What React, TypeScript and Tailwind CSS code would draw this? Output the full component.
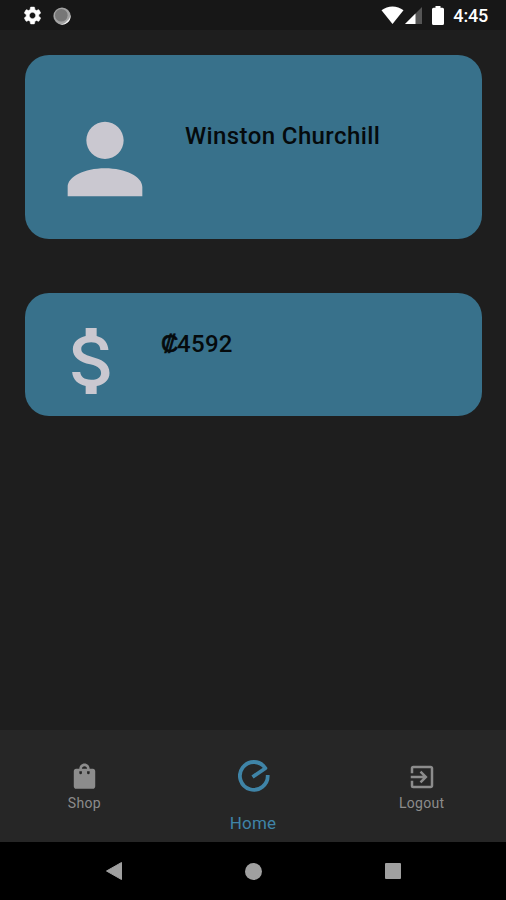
import type { ReactNode } from "react";

type TabItemProps = {
  children: ReactNode;
  label: string;
};

function StatusBar() {
  return (
    <header className="flex h-[30px] items-center bg-[#171717] pt-px pr-[18px] pl-[22px]">
      <svg className="size-[21px]" viewBox="0 0 24 24" fill="#fff">
        <path
          d="M19.14 12.94c.04-.3.06-.61.06-.94 0-.32-.02-.64-.07-.94l2.03-1.58a.49.49 0 0 0 .12-.61l-1.92-3.32a.488.488 0 0 0-.59-.22l-2.39.96c-.5-.38-1.03-.7-1.62-.94l-.36-2.54a.484.484 0 0 0-.48-.41h-3.84c-.24 0-.43.17-.47.41l-.36 2.54c-.59.24-1.13.57-1.62.94l-2.39-.96c-.22-.08-.47 0-.59.22L2.74 8.87c-.12.21-.08.47.12.61l2.03 1.58c-.05.3-.09.63-.09.94s.02.64.07.94l-2.03 1.58a.49.49 0 0 0-.12.61l1.92 3.32c.12.22.37.29.59.22l2.39-.96c.5.38 1.03.7 1.62.94l.36 2.54c.05.24.24.41.48.41h3.84c.24 0 .44-.17.47-.41l.36-2.54c.59-.24 1.13-.56 1.62-.94l2.39.96c.22.08.47 0 .59-.22l1.92-3.32c.12-.22.07-.47-.12-.61l-2.01-1.58zM12 15.6c-1.98 0-3.6-1.62-3.6-3.6s1.62-3.6 3.6-3.6 3.6 1.62 3.6 3.6-1.62 3.6-3.6 3.6z"
          stroke="#fff"
          strokeWidth=".6"
        />
      </svg>
      <svg className="ml-[10px] size-[18px]" viewBox="0 0 18 18">
        <circle cx="9" cy="9" r="8.6" fill="#a3a3a3" />
        <path d="M17.4 7.5A8.6 8.6 0 0 1 5.5 17 8.6 8.6 0 0 0 14 14a8.6 8.6 0 0 0 3.4-6.5z" fill="#f2f2f2" />
        <circle cx="8.3" cy="8.3" r="6.3" fill="#777" />
      </svg>
      <div className="ml-auto flex items-center">
        <svg className="mb-0.5 h-[18px] w-[23px]" viewBox="0 0 23 18" fill="#fff">
          <path d="M.5 4.3C6.8-.8 16.2-.8 22.5 4.3L11.5 18z" />
        </svg>
        <svg className="ml-px h-[17px] w-[17px]" viewBox="0 0 17 17">
          <path d="M0 17 17 0v17z" fill="#555" />
          <path d="M0 17 10.5 6.5V17z" fill="#fff" />
        </svg>
        <svg className="ml-[10px] h-[19px] w-[12px]" viewBox="0 0 12 19" fill="#fff">
          <path d="M3.5 0h5v1.7h2A1.5 1.5 0 0 1 12 3.2v14.3a1.5 1.5 0 0 1-1.5 1.5h-9A1.5 1.5 0 0 1 0 17.5V3.2a1.5 1.5 0 0 1 1.5-1.5h2z" />
        </svg>
        <span className="ml-[9px] text-[18px] leading-[28px] font-medium tracking-[-0.2px] text-white">
          4:45
        </span>
      </div>
    </header>
  );
}

function TabItem({ children, label }: TabItemProps) {
  return (
    <button className="flex flex-1 flex-col items-center pt-[31px] text-[#8c8c8c]" type="button">
      <span className="flex h-[31px] items-center">{children}</span>
      <span className="mt-px text-[14px] leading-[20px] tracking-[0.3px]">{label}</span>
    </button>
  );
}

export default function App() {
  return (
    <div className="flex h-[900px] w-[506px] flex-col overflow-hidden bg-[#1e1e1e] font-[Roboto,sans-serif]">
      <StatusBar />

      <main className="flex flex-1 flex-col gap-[54px] pt-[25px] pr-6 pl-[25px]">
        <section className="flex h-[184px] items-start rounded-[24px] bg-[#38718b] pt-12 pl-6">
          <svg className="size-[112px] shrink-0" viewBox="0 0 24 24" fill="#cac8d0">
            <path d="M12 12c2.21 0 4-1.79 4-4s-1.79-4-4-4-4 1.79-4 4 1.79 4 4 4zm0 2c-4.42 0-8 1.79-8 4v2h16v-2c0-2.21-3.58-4-8-4z" />
          </svg>
          <h1 className="mt-[19px] ml-6 text-[24px] leading-[28px] font-medium tracking-[0.4px] text-[#050a0c]">
            Winston Churchill
          </h1>
        </section>

        <section className="flex h-[123px] items-start rounded-[24px] bg-[#38718b] pt-6 pl-6">
          <svg className="size-[88px] shrink-0" viewBox="0 0 24 24" fill="#cac8d0">
            <path d="M11.8 10.9c-2.27-.59-3-1.2-3-2.15 0-1.09 1.01-1.85 2.7-1.85 1.78 0 2.44.85 2.5 2.1h2.21c-.07-1.72-1.12-3.3-3.21-3.81V3h-3v2.16c-1.94.42-3.5 1.68-3.5 3.61 0 2.31 1.91 3.46 4.7 4.13 2.5.6 3 1.48 3 2.41 0 .69-.49 1.79-2.7 1.79-2.06 0-2.87-.92-2.98-2.1h-2.2c.12 2.19 1.76 3.42 3.68 3.83V21h3v-2.15c1.95-.37 3.5-1.5 3.5-3.55 0-2.84-2.43-3.81-4.7-4.4z" />
          </svg>
          <p className="mt-[13px] ml-6 flex text-[24px] leading-[28px] font-medium text-[#050a0c]">
            <span className="w-4 font-medium [-webkit-text-stroke:0.7px_#050a0c]">₡</span>
            <span className="tracking-[0.3px]">4592</span>
          </p>
        </section>
      </main>

      <nav className="flex h-[112px] bg-[#262626]">
        <TabItem label="Shop">
          <svg className="h-[31px] w-[31px]" viewBox="0 0 24 24" fill="currentColor">
            <path d="M18.5 6H16c0-2.21-1.79-4-4-4S8 3.79 8 6H5.500C4.400 6 3.700 6.900 3.700 8v11.500c0 1.100.7 2 1.800 2h13c1.100 0 1.800-.9 1.800-2V8c0-1.100-.7-2-1.800-2zM10 9.300a1 1 0 1 1-2 0V8h2zm2-5.300c1.100 0 2 .9 2 2h-4c0-1.100.9-2 2-2zm4 5.300a1 1 0 1 1-2 0V8h2z" />
          </svg>
        </TabItem>
        <button
          className="flex flex-1 flex-col items-center pt-[30px] text-[#3f84a7]"
          type="button"
        >
          <svg className="ml-px size-8" viewBox="0 0 32 32" fill="none" stroke="currentColor">
            <path
              d="M14.500 17 27.400 8.200A13.900 13.900 0 1 0 29.700 15"
              strokeWidth="3.800"
              strokeLinejoin="round"
            />
          </svg>
          <span className="mt-[21px] text-[17px] leading-[20px] tracking-[0.2px]">Home</span>
        </button>
        <TabItem label="Logout">
          <svg className="ml-px h-[30px] w-[30px]" viewBox="0 0 24 24" fill="currentColor">
            <path d="M10.09 15.59 11.5 17l5-5-5-5-1.410 1.410L12.670 11H3v2h9.670l-2.580 2.590zM19 3H5a2 2 0 0 0-2 2v4h2V5h14v14H5v-4H3v4a2 2 0 0 0 2 2h14c1.100 0 2-.9 2-2V5c0-1.100-.9-2-2-2z" />
          </svg>
        </TabItem>
      </nav>

      <footer className="flex h-[58px] items-center justify-center gap-[123px] bg-black">
        <svg className="h-[18px] w-4" viewBox="0 0 16 18" fill="#a0a0a0">
          <path d="M15.500.5v17L.5 9z" stroke="#a0a0a0" strokeLinejoin="round" />
        </svg>
        <div className="size-[17px] rounded-full bg-[#a0a0a0]" />
        <div className="size-4 rounded-[1px] bg-[#a0a0a0]" />
      </footer>
    </div>
  );
}
